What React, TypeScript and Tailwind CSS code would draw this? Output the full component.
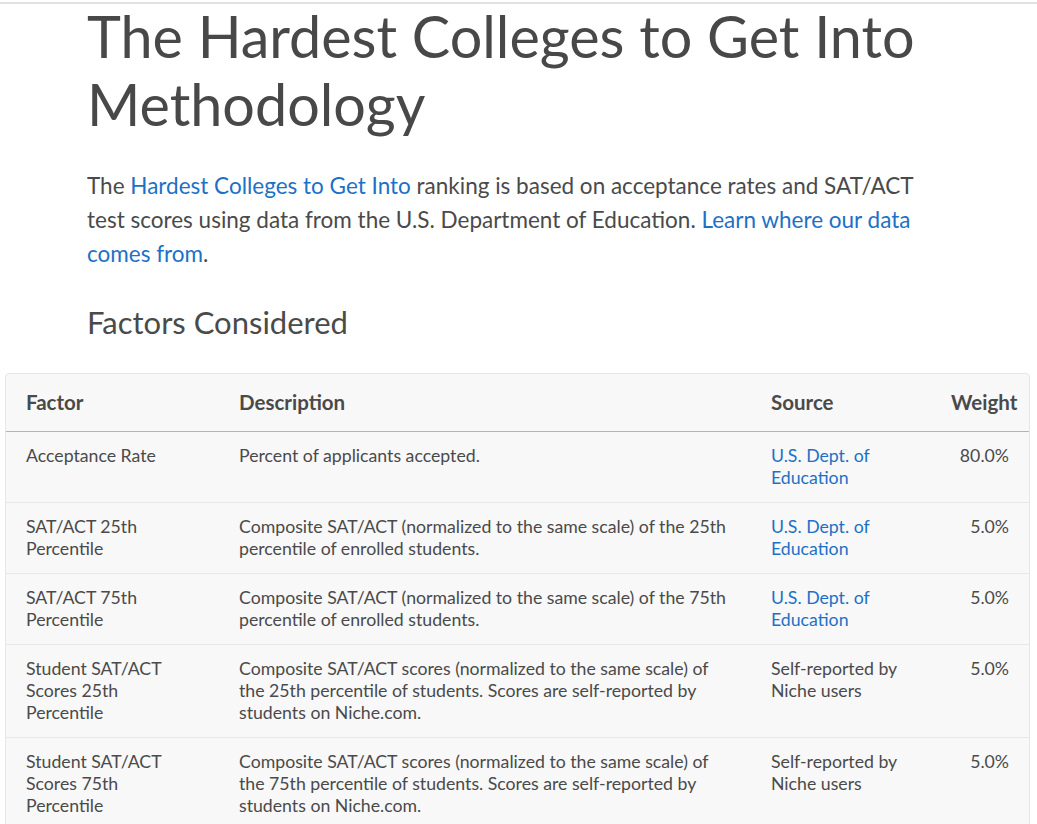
const rows = [
  {
    factor: ["Acceptance Rate"],
    desc: ["Percent of applicants accepted."],
    source: ["U.S. Dept. of", "Education"],
    link: true,
    weight: "80.0%",
  },
  {
    factor: ["SAT/ACT 25th", "Percentile"],
    desc: [
      "Composite SAT/ACT (normalized to the same scale) of the 25th",
      "percentile of enrolled students.",
    ],
    source: ["U.S. Dept. of", "Education"],
    link: true,
    weight: "5.0%",
  },
  {
    factor: ["SAT/ACT 75th", "Percentile"],
    desc: [
      "Composite SAT/ACT (normalized to the same scale) of the 75th",
      "percentile of enrolled students.",
    ],
    source: ["U.S. Dept. of", "Education"],
    link: true,
    weight: "5.0%",
  },
  {
    factor: ["Student SAT/ACT", "Scores 25th", "Percentile"],
    desc: [
      "Composite SAT/ACT scores (normalized to the same scale) of",
      "the 25th percentile of students. Scores are self-reported by",
      "students on Niche.com.",
    ],
    source: ["Self-reported by", "Niche users"],
    link: false,
    weight: "5.0%",
  },
  {
    factor: ["Student SAT/ACT", "Scores 75th", "Percentile"],
    desc: [
      "Composite SAT/ACT scores (normalized to the same scale) of",
      "the 75th percentile of students. Scores are self-reported by",
      "students on Niche.com.",
    ],
    source: ["Self-reported by", "Niche users"],
    link: false,
    weight: "5.0%",
  },
];

function Lines({ lines }: { lines: string[] }) {
  return (
    <>
      {lines.map((l, i) => (
        <span key={i} className="block whitespace-nowrap">
          {l}
        </span>
      ))}
    </>
  );
}

export default function App() {
  return (
    <div
      className="min-h-screen bg-white text-[#4a4a4a]"
      style={{ fontFamily: "Lato, 'Liberation Sans', sans-serif" }}
    >
      <div className="pt-[2px]">
        <div className="h-[2px] bg-[#e2e2e2]" />
      </div>

      {/* Intro */}
      <div className="pl-[87px] pr-[60px]">
        <h1 className="-mt-[2px] whitespace-nowrap text-[57.5px] leading-[68px] font-normal text-[#484848]">
          The Hardest Colleges to Get Into
          <br />
          Methodology
        </h1>
        <p className="mt-[31px] whitespace-nowrap text-[22.5px] leading-[34px]">
          The{" "}
          <a href="#" className="text-[#1c71c6]">
            Hardest Colleges to Get Into
          </a>{" "}
          ranking is based on acceptance rates and SAT/ACT
          <br />
          test scores using data from the U.S. Department of Education.{" "}
          <a href="#" className="text-[#1c71c6]">
            Learn where our data
            <br />
            comes from
          </a>
          .
        </p>
        <h2 className="mt-[31px] text-[31px] leading-[40px] font-normal">
          Factors Considered
        </h2>
      </div>

      {/* Table */}
      <div className="mt-[31px] ml-[5px] mr-[7px] rounded-[4px] border border-[#e6e6e6] bg-[#f8f8f8]">
        <table className="w-full table-fixed border-collapse text-left">
          <colgroup>
            <col className="w-[213px]" />
            <col className="w-[532px]" />
            <col className="w-[180px]" />
            <col />
          </colgroup>
          <thead>
            <tr className="border-b border-[#b5b5b5]">
              <th className="px-5 pt-[16px] pb-[17px] text-[20.5px] leading-[24px] font-bold">
                Factor
              </th>
              <th className="px-5 pt-[16px] pb-[17px] text-[20.5px] leading-[24px] font-bold">
                Description
              </th>
              <th className="px-5 pt-[16px] pb-[17px] text-[20.5px] leading-[24px] font-bold">
                Source
              </th>
              <th className="px-5 pt-[16px] pb-[17px] text-right text-[20.5px] leading-[24px] font-bold">
                Weight
              </th>
            </tr>
          </thead>
          <tbody className="text-[17.7px] leading-[22px]">
            {rows.map((r, i) => (
              <tr key={i} className="border-b border-[#e8e8e8] align-top">
                <td className="px-5 pt-[13px] pb-[13px]">
                  <Lines lines={r.factor} />
                </td>
                <td className="px-5 pt-[13px] pb-[13px]">
                  <Lines lines={r.desc} />
                </td>
                <td
                  className={
                    r.link
                      ? "px-5 pt-[13px] pb-[13px] text-[#1c71c6]"
                      : "px-5 pt-[13px] pb-[13px]"
                  }
                >
                  <Lines lines={r.source} />
                </td>
                <td className="px-5 pt-[13px] pb-[13px] text-right">
                  {r.weight}
                </td>
              </tr>
            ))}
          </tbody>
        </table>
      </div>
    </div>
  );
}
